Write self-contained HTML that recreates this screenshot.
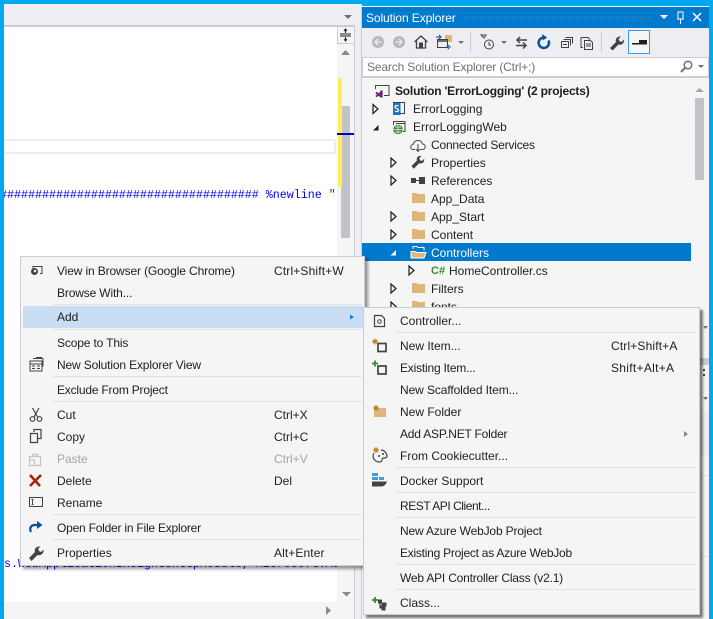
<!DOCTYPE html>
<html><head><meta charset="utf-8"><style>
html,body{margin:0;padding:0}
body{width:713px;height:619px;overflow:hidden;position:relative;background:#00a8f0;font-family:"Liberation Sans",sans-serif;font-size:12px;color:#1e1e1e}
div{position:absolute;box-sizing:border-box}
.t{white-space:nowrap;line-height:18px;height:18px}
.d{color:#a2a4a5}
.s{height:1px;background:#e0e0e6}
svg{position:absolute;left:0;top:0}
</style></head><body>
<!-- left pane -->
<div style="left:4px;top:4px;width:358px;height:615px;background:#eeeef2"></div>
<div style="left:4px;top:25px;width:351px;height:2px;background:#ccccd6"></div>
<div style="left:354px;top:25px;width:1px;height:594px;background:#ccccd6"></div>
<div style="left:4px;top:27px;width:333px;height:575px;background:#fff;overflow:hidden">
  <div style="left:-2px;top:112px;width:334px;height:15px;border:2px solid #eeeef2;border-left:0"></div>
  <div style="left:-25px;top:160px;white-space:nowrap;font:11.67px/16px 'Liberation Mono',monospace;color:#0000ff">########################################&nbsp;%newline&nbsp;<span style="color:#a31515">"</span></div>
  <div style="left:0;top:529px;white-space:nowrap;font:11.67px/16px 'Liberation Mono',monospace;color:#0000ff">s.WebApplicationInsightsHttpModule, Microsoft.AspNet.TelemetryCorrelation, Version=1.0.0.0</div>
</div>
<div style="left:4px;top:602px;width:350px;height:17px;background:#f5f5f5"></div>
<div style="left:337px;top:27px;width:17px;height:592px;background:#f5f5f5"></div>
<div style="left:337px;top:27px;width:17px;height:17px;background:#f5f5f5;border:1px solid #ccccd6;border-top:0;border-right:0"></div>
<div style="left:341px;top:106px;width:9px;height:132px;background:#c2c3c9"></div>
<div style="left:338px;top:78px;width:4px;height:109px;background:#ffee58"></div>
<div style="left:337px;top:133px;width:17px;height:2px;background:#0000cc"></div>
<!-- solution explorer -->
<div style="left:361px;top:6px;width:348px;height:613px;background:#f5f5f5;border-left:1px solid #ccccd6"></div>
<div style="left:362px;top:7px;width:347px;height:21px;background:#007acc"></div>
<div class="t" style="left:366px;top:9px;color:#fff;letter-spacing:-.1px">Solution Explorer</div>
<div style="left:362px;top:28px;width:347px;height:29px;background:#eeeef2"></div>
<div style="left:628px;top:30px;width:22px;height:24px;background:#f5f5f5;border:1px solid #3399ff"></div>
<div style="left:470px;top:32px;width:1px;height:20px;background:#ccccd6"></div>
<div style="left:601px;top:32px;width:1px;height:20px;background:#ccccd6"></div>
<div style="left:362px;top:57px;width:347px;height:20px;background:#fff;border:1px solid #ccccd6"></div>
<div class="t" style="left:367px;top:58px;color:#717171;letter-spacing:-.15px">Search Solution Explorer (Ctrl+;)</div>
<div style="left:362px;top:77px;width:347px;height:1px;background:#ccccd6"></div>
<div style="left:695px;top:98px;width:9px;height:82px;background:#c2c3c9"></div>
<div style="left:362px;top:243px;width:329px;height:18px;background:#007acc"></div>
<div class="t" style="left:395px;top:82px;font-weight:bold;letter-spacing:-.2px">Solution 'ErrorLogging' (2 projects)</div>
<div class="t" style="left:413px;top:100px">ErrorLogging</div>
<div class="t" style="left:413px;top:118px">ErrorLoggingWeb</div>
<div class="t" style="left:431px;top:136px;letter-spacing:-.2px">Connected Services</div>
<div class="t" style="left:431px;top:154px">Properties</div>
<div class="t" style="left:431px;top:172px">References</div>
<div class="t" style="left:431px;top:190px">App_Data</div>
<div class="t" style="left:431px;top:208px">App_Start</div>
<div class="t" style="left:431px;top:226px">Content</div>
<div class="t" style="left:431px;top:244px;color:#fff">Controllers</div>
<div class="t" style="left:449px;top:262px">HomeController.cs</div>
<div class="t" style="left:431px;top:280px">Filters</div>
<div class="t" style="left:431px;top:298px">fonts</div>
<!-- right bits behind the submenu -->
<div style="left:700px;top:358px;width:9px;height:7px;background:#c9cbd8"></div>
<div style="left:700px;top:410px;width:9px;height:46px;background:#eeeef2"></div>
<div style="left:700px;top:475px;width:9px;height:1px;background:#e0e0e6"></div>
<div style="left:700px;top:556px;width:9px;height:1px;background:#e0e0e6"></div>
<svg width="713" height="619" viewBox="0 0 713 619">
<defs>
<path id="fo" d="M0 1h5l1 1h7v9H0z" fill="#dcb67a"/>
<path id="ex" d="M0 0l5 4.500-5 4.500z" fill="#f5f5f5" stroke="#1e1e1e" stroke-width="1.200"/>
<pattern id="gr" width="4" height="4" patternUnits="userSpaceOnUse"><rect width="1" height="1" fill="#3f9ad8"/><rect x="2" y="2" width="1" height="1" fill="#3f9ad8"/></pattern>
</defs>
<rect x="463" y="15" width="188" height="5" fill="url(#gr)"/>
<!-- editor top and scroll arrows -->
<path d="M344 15h8l-4 4z" fill="#717171"/>
<path d="M341 55l4.500-5 4.500 5z M342 592h9l-4.500 4.500z M326 606l5 4.500-5 4.500z" fill="#868999"/>
<path d="M340 34h11M340 36h11" stroke="#1e1e1e" fill="none"/>
<path d="M345.500 29v4M345.500 37v4M344 31l1.500-2 1.500 2M344 39l1.500 2 1.500-2" stroke="#1e1e1e" fill="none"/>
<!-- title buttons -->
<path d="M660 15h8l-4 4z" fill="#fff"/>
<path d="M678 12h5v7h-5zM677 19h7M680.500 19v5" stroke="#fff" fill="none"/>
<path d="M693 13l8 8M701 13l-8 8" stroke="#fff" stroke-width="1.500"/>
<!-- toolbar -->
<circle cx="378" cy="42" r="6" fill="#b9b9b9"/><path d="M381.500 42h-6M378 39l-3 3 3 3" stroke="#eeeef2" stroke-width="1.300" fill="none"/>
<circle cx="399" cy="42" r="6" fill="#b9b9b9"/><path d="M395.500 42h6M399 39l3 3-3 3" stroke="#eeeef2" stroke-width="1.300" fill="none"/>
<path d="M414.500 42l6.500-6 6.500 6M416.500 40.500v7.500h9v-7.500" stroke="#424242" stroke-width="1.300" fill="none"/><path d="M419 42.500h4v6h-4z" fill="#424242"/>
<path d="M445 35h6l1 1v6h-7z" fill="#dcb67a"/>
<rect x="437.500" y="39.500" width="10" height="8" fill="#eeeef2" stroke="#424242"/><path d="M437 41h11" stroke="#424242" stroke-width="1.500"/>
<path d="M436 37h5M439 35l2 2-2 2M451 47h-4M449 45l-2 2 2 2" stroke="#00539c" fill="none"/>
<path d="M458 41h6l-3 3z" fill="#717171"/>
<circle cx="489" cy="44.500" r="4.500" fill="none" stroke="#424242"/><path d="M489 42v3h2M481 35h5l-2 3z" stroke="#424242" fill="none"/>
<path d="M501 41h6l-3 3z" fill="#717171"/>
<path d="M527 40h-10M520 37l-3 3 3 3M516 45.500h10M523 42.500l3 3-3 3" stroke="#424242" stroke-width="1.500" fill="none"/>
<path d="M548.500 40.500a5.200 5.200 0 1 1-3.500-2.800" stroke="#00539c" stroke-width="2.500" fill="none"/><path d="M542 34l5 3.500-4 3z" fill="#00539c"/>
<path d="M561.500 41.500h7v6h-7zM563.500 39.500h7v6M565.500 37.500h7v6M563 44.500h4" stroke="#424242" fill="none"/>
<path d="M581 37.500h7l2 2M581 37.500v10h2M584.500 40.500h6l2 2v7h-8zM586 44h5M586 46h5" stroke="#424242" fill="none"/>
<path d="M610 48l6-6c-1-3 1-6 5-5.500l-2.500 2.500 1 2 2 1 2.500-2.500c.5 4-2.500 6-5.500 5l-6 6z" fill="#424242"/>
<path d="M632 43h15v1.500h-15zM639 40h8v3h-8z" fill="#1e1e1e"/>
<!-- search -->
<circle cx="688" cy="65" r="3.800" fill="none" stroke="#717171" stroke-width="1.500"/><path d="M685 68l-4 4" stroke="#717171" stroke-width="2"/>
<path d="M698 65h6l-3 3z" fill="#717171"/>
<path d="M695 92l4.500-4 4.500 4z" fill="#a6a6b2"/>
<!-- tree icons -->
<path d="M375.500 89v-3.500h13.500v10h-5" fill="none" stroke="#424242"/>
<path d="M376 92.500l5 4M376 96.500l5-4" stroke="#68217a" stroke-width="1.800" fill="none"/><path d="M381.500 90.500v7" stroke="#68217a" stroke-width="2.200"/>
<use href="#ex" x="373" y="104.500"/>
<path d="M393 102.500h11.500v11h-4" fill="none" stroke="#424242"/><rect x="393" y="103" width="7.500" height="12" fill="#1b75bc"/>
<path d="M398.500 106c-2-1-3.500-.5-3.500 1s3.500 1.500 3.500 3-2 2-3.500 1" stroke="#fff" fill="none" stroke-width="1.200"/>
<path d="M373 130.500l5.500-5.500v5.500z" fill="#1e1e1e"/>
<path d="M393.500 125v-3.500h11.500v10h-2M396 123.500h9" stroke="#424242" fill="none"/><circle cx="398" cy="129.500" r="4.800" fill="#388a34"/><path d="M393.500 129.500h9M398 125v9M395 127h6M395 132h6" stroke="#f5f5f5" stroke-width=".7"/>
<path d="M415 149.500h-1.500a2.500 2.500 0 0 1-.5-5c.5-2.500 2.500-4 5-4s4 1.500 4.500 3.500a2.700 2.700 0 0 1 0 5.500h-2" fill="none" stroke="#424242"/><path d="M418 144v7M416 149l2 2.500 2-2.500" stroke="#424242" fill="none"/>
<use href="#ex" x="391" y="158"/>
<path d="M411.500 166l5.500-5.500c-.8-2.800 1-5 4.500-4.500l-2.300 2.300.8 1.800 1.900.9 2.300-2.300c.5 3.600-2.200 5.500-5 4.600l-5.500 5.500z" fill="#424242"/>
<use href="#ex" x="391" y="176"/>
<path d="M411 178h5v5h-5zM419 177h6v7h-6z" fill="#424242"/><path d="M416 180.500h3" stroke="#424242"/>
<use href="#fo" x="412" y="192"/>
<use href="#ex" x="391" y="212"/><use href="#fo" x="412" y="210"/>
<use href="#ex" x="391" y="230"/><use href="#fo" x="412" y="228"/>
<path d="M390.500 255.500l5.500-5.500v5.500z" fill="#fff"/>
<path d="M413 249v-2.500h4l1 1h6v3" fill="none" stroke="#fff"/><path d="M411 258v-6.500h4l2 1h9l-2 5.500z" fill="#dcb67a" stroke="#fff"/>
<use href="#ex" x="409" y="266"/>
<text x="431" y="274" font-family="Liberation Sans,sans-serif" font-size="11" font-weight="bold" fill="#388a34">C#</text>
<use href="#ex" x="391" y="284"/><use href="#fo" x="412" y="282"/>
<use href="#ex" x="391" y="302"/><use href="#fo" x="412" y="300"/>
<path d="M703 326h5l-2.500 3zM703 397h5l-2.500 3z" fill="#717171"/>
<path d="M703 369h2v2h-2zM703 374h2v2h-2z" fill="#424242"/>
</svg>
<!-- menu 1 -->
<div style="left:20px;top:256px;width:345px;height:310px;background:#f5f5f5;border:1px solid #ccccd6;box-shadow:3px 3px 3px rgba(0,0,0,.4)"></div>
<div style="left:23px;top:306px;width:340px;height:22px;background:#c9def5"></div>
<div class="s" style="left:53px;top:304px;width:309px"></div>
<div class="s" style="left:53px;top:329px;width:309px"></div>
<div class="s" style="left:53px;top:376px;width:309px"></div>
<div class="s" style="left:53px;top:401px;width:309px"></div>
<div class="s" style="left:53px;top:514px;width:309px"></div>
<div class="s" style="left:53px;top:539px;width:309px"></div>
<div class="t" style="left:57px;top:262px;letter-spacing:-.13px">View in Browser (Google Chrome)</div><div class="t" style="left:274px;top:262px;letter-spacing:.15px">Ctrl+Shift+W</div>
<div class="t" style="left:57px;top:284px;letter-spacing:-.15px">Browse With...</div>
<div class="t" style="left:57px;top:308px">Add</div>
<div class="t" style="left:57px;top:334px;letter-spacing:-.15px">Scope to This</div>
<div class="t" style="left:57px;top:356px;letter-spacing:-.15px">New Solution Explorer View</div>
<div class="t" style="left:57px;top:381px;letter-spacing:-.2px">Exclude From Project</div>
<div class="t" style="left:57px;top:406px">Cut</div><div class="t" style="left:274px;top:406px">Ctrl+X</div>
<div class="t" style="left:57px;top:428px">Copy</div><div class="t" style="left:274px;top:428px">Ctrl+C</div>
<div class="t d" style="left:57px;top:450px">Paste</div><div class="t d" style="left:274px;top:450px">Ctrl+V</div>
<div class="t" style="left:57px;top:472px">Delete</div><div class="t" style="left:274px;top:472px">Del</div>
<div class="t" style="left:57px;top:494px">Rename</div>
<div class="t" style="left:57px;top:519px;letter-spacing:-.22px">Open Folder in File Explorer</div>
<div class="t" style="left:57px;top:544px">Properties</div><div class="t" style="left:274px;top:544px;letter-spacing:.1px">Alt+Enter</div>
<svg width="713" height="619" viewBox="0 0 713 619">
<path d="M33 268.500v-2h9v7h-2" fill="none" stroke="#424242"/><circle cx="34.500" cy="271.500" r="3.500" fill="#424242"/><circle cx="35" cy="271" r="1.300" fill="#f5f5f5"/>
<path d="M350 314.500l4 2.500-4 2.500z" fill="#1e7ae0"/>
<path d="M30 361h12v10H30zM30 364h12M32 366h3M37 366h3M32 368.500h3M37 368.500h3M33 358.500h10v8M36 357.500h6" fill="none" stroke="#424242"/>
<path d="M32.500 408l5 9M39 408l-5 9" stroke="#424242" stroke-width="1.200" fill="none"/><circle cx="32.500" cy="419" r="2.300" fill="none" stroke="#424242" stroke-width="1.200"/><circle cx="39.500" cy="419" r="2.300" fill="none" stroke="#424242" stroke-width="1.200"/>
<path d="M30.500 433.500h7v9h-7zM34 432v-2.500h7v9h-3" fill="none" stroke="#424242" stroke-width="1.200"/>
<path d="M29.500 456.500h11v9h-11zM32.500 456.500v-2h5v2M29.500 460h5v5.500" fill="none" stroke="#c4c4c8" stroke-width="1.200"/>
<path d="M30 475l10 11M41 475l-11 11" stroke="#a1260d" stroke-width="2.600"/>
<path d="M29.500 497.500h13v9h-13z" fill="none" stroke="#424242"/><path d="M31.500 499.500h2M31.500 504.500h2M32.500 499.500v5" stroke="#424242" fill="none"/>
<path d="M31 532c-2-4 0-7 4-7h5" fill="none" stroke="#00539c" stroke-width="2.200"/><path d="M37 521l5.500 4-5.500 4z" fill="#00539c"/>
<path d="M29 558l6-6c-1-3 1-6 5.500-5.500l-2.500 2.500 1 2 2 1 2.500-2.500c.5 4-2.500 6.500-6 5.500l-6 6z" fill="#424242"/>
</svg>
<!-- menu 2 -->
<div style="left:363px;top:307px;width:337px;height:308px;background:#f5f5f5;border:1px solid #ccccd6;box-shadow:3px 3px 2px rgba(0,0,0,.5)"></div>
<div class="s" style="left:396px;top:332px;width:300px"></div>
<div class="s" style="left:396px;top:467px;width:300px"></div>
<div class="s" style="left:396px;top:492px;width:300px"></div>
<div class="s" style="left:396px;top:517px;width:300px"></div>
<div class="s" style="left:396px;top:564px;width:300px"></div>
<div class="s" style="left:396px;top:589px;width:300px"></div>
<div class="t" style="left:400px;top:312px">Controller...</div>
<div class="t" style="left:400px;top:337px">New Item...</div><div class="t" style="left:611px;top:337px;letter-spacing:.15px">Ctrl+Shift+A</div>
<div class="t" style="left:400px;top:359px;letter-spacing:-.2px">Existing Item...</div><div class="t" style="left:611px;top:359px;letter-spacing:.3px">Shift+Alt+A</div>
<div class="t" style="left:400px;top:381px;letter-spacing:-.1px">New Scaffolded Item...</div>
<div class="t" style="left:400px;top:403px">New Folder</div>
<div class="t" style="left:400px;top:425px;letter-spacing:-.2px">Add ASP.NET Folder</div>
<div class="t" style="left:400px;top:447px">From Cookiecutter...</div>
<div class="t" style="left:400px;top:472px">Docker Support</div>
<div class="t" style="left:400px;top:497px;letter-spacing:-.45px">REST API Client...</div>
<div class="t" style="left:400px;top:522px;letter-spacing:-.17px">New Azure WebJob Project</div>
<div class="t" style="left:400px;top:544px;letter-spacing:-.25px">Existing Project as Azure WebJob</div>
<div class="t" style="left:400px;top:569px;letter-spacing:-.2px">Web API Controller Class (v2.1)</div>
<div class="t" style="left:400px;top:594px">Class...</div>
<svg width="713" height="619" viewBox="0 0 713 619">
<path d="M374.500 315.500h7l3 3v8h-10z" fill="none" stroke="#424242" stroke-width="1.200"/><circle cx="379.500" cy="321.500" r="1.800" fill="none" stroke="#424242"/>
<rect x="378" y="343.500" width="8" height="8" fill="none" stroke="#424242" stroke-width="1.700"/>
<path d="M372 341.500h6M375 338.500v6M373 339.500l4 4M377 339.500l-4 4" stroke="#c27d1a"/>
<rect x="378" y="366" width="8" height="8" fill="none" stroke="#424242" stroke-width="1.700"/>
<path d="M372 363.500h6M375 360.500v6" stroke="#388a34" stroke-width="1.800"/>
<path d="M374 407h4l1 1h7v9h-12z" fill="#dcb67a"/>
<path d="M373 408h6M376 405v6M374 406l4 4M378 406l-4 4" stroke="#c27d1a"/>
<path d="M684 431l4 3-4 3z" fill="#868999"/>
<path d="M381 450c3 0 6 3 6 6 0 2-2 2-3 2s-2 0-2 2c0 1-1 2-3 2-3 0-6-3-6-6 0-1 .5-2 1-3" fill="none" stroke="#424242" stroke-width="1.200"/><circle cx="379" cy="456" r="1" fill="#424242"/><circle cx="383" cy="454" r="1" fill="#424242"/>
<path d="M373 450h6M376 447v6M374 448l4 4M378 448l-4 4" stroke="#c27d1a"/>
<path d="M372 473h6v3h-6zM372 477h6v3h-6zM379 477h5v3h-5z" fill="#3f9fd8"/>
<path d="M372 481.500h15c-1 3-3 5-6 5h-9z" fill="#424242"/>
<path d="M372 600h6M375 597v6" stroke="#388a34" stroke-width="1.800"/>
<path d="M378.500 600h3v3h-3zM382 603h4v3h-4zM382 607h3v3h-3zM380 602v6h2" fill="#424242" stroke="#424242"/>
</svg>
</body></html>
